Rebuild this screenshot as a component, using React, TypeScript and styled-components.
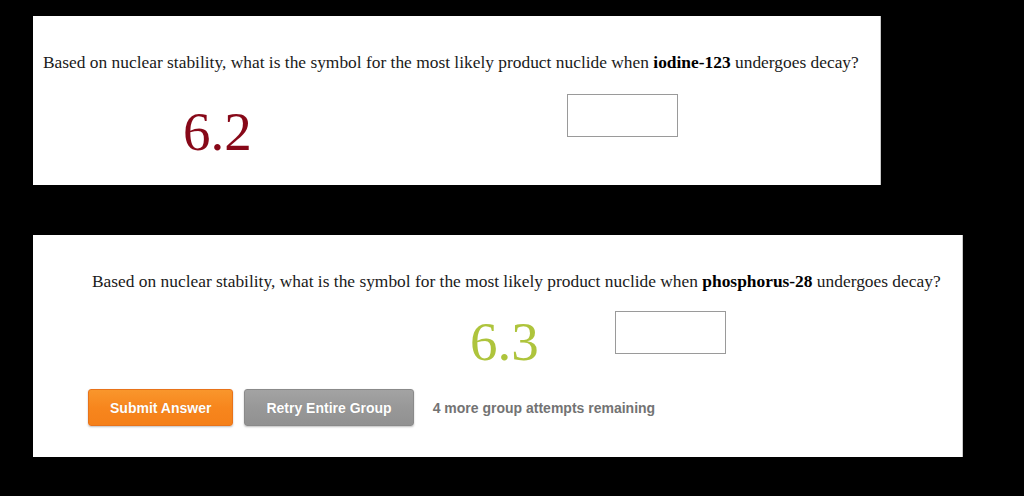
import { createGlobalStyle, styled } from 'styled-components';

const GlobalStyle = createGlobalStyle`
  html, body {
    margin: 0;
    padding: 0;
    background-color: #000000;
  }

  body {
    width: 1024px;
    height: 496px;
    overflow: hidden;
    font-family: "Liberation Serif", "Times New Roman", serif;
  }
`;

const Page = styled.div`
  display: flex;
  flex-direction: column;
  align-items: flex-start;
  padding: 16px 0 0 33px;
  gap: 50px;
`;

interface PanelProps {
  $width: number,
  $height: number,
  $padTop: number,
  $padLeft: number
}

const Panel = styled.section<PanelProps>`
  box-sizing: border-box;
  width: ${p => p.$width}px;
  height: ${p => p.$height}px;
  padding-top: ${p => p.$padTop}px;
  padding-left: ${p => p.$padLeft}px;
  background-color: #FFFFFF;
  border-right: 1px solid #c8c8c8;
`;

const Question = styled.p`
  margin: 0;
  font-size: 17.4px;
  line-height: 20px;
  white-space: nowrap;
  color: #1a1a1a;

  b {
    font-weight: 700;
    color: #000000;
  }
`;

const AnswerRow = styled.div<{ $top: number }>`
  display: flex;
  align-items: flex-start;
  margin-top: ${p => p.$top}px;
`;

interface NumberProps {
  $color: string,
  $indent: number,
  $width: number,
  $top: number
}

const ProblemNumber = styled.div<NumberProps>`
  margin-left: ${p => p.$indent}px;
  margin-top: ${p => p.$top}px;
  width: ${p => p.$width}px;
  font-size: 55px;
  line-height: 64px;
  color: ${p => p.$color};
`;

const AnswerBox = styled.input`
  box-sizing: border-box;
  width: 111px;
  height: 43px;
  margin: 0;
  border: 1px solid #9a9a9a;
  background: #FFFFFF;
  outline: none;
`;

const Actions = styled.div`
  display: flex;
  align-items: center;
  margin-top: 15px;
  margin-left: -4px;
  font-family: "Liberation Sans", Arial, sans-serif;
`;

const Button = styled.button<{ $tone: 'orange' | 'gray' }>`
  box-sizing: border-box;
  height: 37px;
  padding: 0 21px;
  margin-right: 11px;
  border-radius: 3px;
  border: 1px solid ${p => p.$tone === 'orange' ? '#e8731a' : '#8a8a8a'};
  background: ${p => p.$tone === 'orange'
    ? 'linear-gradient(#f9962c, #f7861d 50%, #f58019)'
    : 'linear-gradient(#a3a3a3, #989898 50%, #919191)'};
  box-shadow: 0 1px 2px rgba(0, 0, 0, 0.25);
  color: #FFFFFF;
  font-family: inherit;
  font-size: 14px;
  font-weight: 700;
  text-shadow: 0 0 1px rgba(0, 0, 0, 0.15);
  cursor: pointer;
`;

const Attempts = styled.span`
  margin-left: 8px;
  font-size: 14px;
  font-weight: 700;
  color: #737373;
`;

const App = () => {
  return (
    <>
      <GlobalStyle />
      <Page>
        <Panel $width={848} $height={169} $padTop={36} $padLeft={10}>
          <Question>
            Based on nuclear stability, what is the symbol for the most likely product nuclide when <b>iodine-123</b> undergoes decay?
          </Question>
          <AnswerRow $top={22}>
            <ProblemNumber $color="#870818" $indent={140} $width={384} $top={6}>6.2</ProblemNumber>
            <AnswerBox type="text" />
          </AnswerRow>
        </Panel>
        <Panel $width={930} $height={222} $padTop={36} $padLeft={59}>
          <Question>
            Based on nuclear stability, what is the symbol for the most likely product nuclide when <b>phosphorus-28</b> undergoes decay?
          </Question>
          <AnswerRow $top={20}>
            <ProblemNumber $color="#aec43c" $indent={378} $width={145} $top={-1}>6.3</ProblemNumber>
            <AnswerBox type="text" />
          </AnswerRow>
          <Actions>
            <Button $tone="orange">Submit Answer</Button>
            <Button $tone="gray">Retry Entire Group</Button>
            <Attempts>4 more group attempts remaining</Attempts>
          </Actions>
        </Panel>
      </Page>
    </>
  );
}

export default App;
